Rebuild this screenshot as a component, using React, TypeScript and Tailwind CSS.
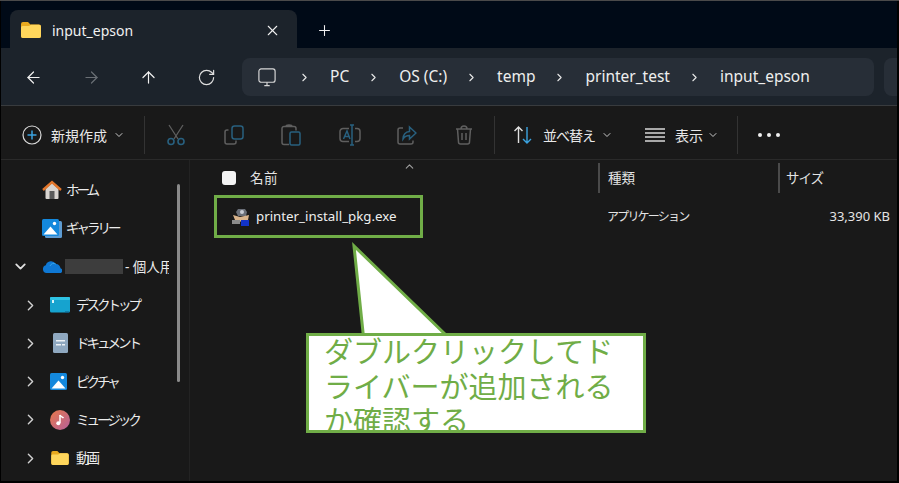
import { ArrowLeft, ArrowRight, ArrowUp, ChevronDown, ChevronRight, ChevronUp, Plus, RotateCw, X } from "lucide-react"
import type { ReactNode } from "react"

const FolderIcon = ({ w = 20, h = 16 }: { w?: number; h?: number }) => (
  <svg width={w} height={h} viewBox="0 0 20 16">
    <path d="M0 2a2 2 0 0 1 2-2h5l2.5 2.5H18a2 2 0 0 1 2 2V14a2 2 0 0 1-2 2H2a2 2 0 0 1-2-2z" fill="#e9a91f" />
    <path d="M0 5.5a1.5 1.5 0 0 1 1.5-1.500L8 4l2-1.300h8a2 2 0 0 1 2 2V14a2 2 0 0 1-2 2H2a2 2 0 0 1-2-2z" fill="#ffd65c" />
  </svg>
)

const PictureIcon = ({ stacked }: { stacked?: boolean }) => (
  <svg width="20" height="20" viewBox="0 0 20 20">
    {stacked && <rect x="3" y="3" width="17" height="17" rx="1.500" fill="#5d9bd2" />}
    <rect x="0" y="1" width="17" height="17" rx="1.500" fill="#1488dc" />
    <circle cx="12.500" cy="5.500" r="1.700" fill="#fff" />
    <path d="M1.500 16.500 8.500 8.500l7 8z" fill="#fff" />
  </svg>
)

const SidebarIcons: Record<string, ReactNode> = {
  home: (
    <svg width="20" height="20" viewBox="0 0 20 20">
      <path d="M3.500 9v9a1 1 0 0 0 1 1h11a1 1 0 0 0 1-1V9L10 3z" fill="#d8d4d0" />
      <rect x="7.500" y="11" width="5" height="8" fill="#5a5a5a" />
      <path d="M1 10 10 2l9 8" fill="none" stroke="#e3762a" strokeWidth="2.400" />
    </svg>
  ),
  desktop: (
    <svg width="20" height="16" viewBox="0 0 20 16">
      <rect width="20" height="15.500" rx="1.500" fill="#16a3cf" />
      <rect x="0" y="0" width="20" height="3" rx="1" fill="#2ec3e4" />
      <rect x="2" y="3" width="2" height="3" fill="#d6f3fb" />
      <rect x="15" y="14.500" width="4" height="1.500" fill="#0d5d82" />
    </svg>
  ),
  documents: (
    <svg width="15" height="20" viewBox="0 0 15 20">
      <rect width="15" height="20" rx="1.500" fill="#8fa8c0" />
      <rect x="3" y="7" width="9" height="1.500" fill="#eef2f6" />
      <rect x="3" y="11" width="5" height="1.500" fill="#eef2f6" />
      <rect x="9" y="11" width="3" height="1.500" fill="#eef2f6" />
    </svg>
  ),
  pictures: <PictureIcon />,
  gallery: <PictureIcon stacked />,
  music: (
    <svg width="20" height="20" viewBox="0 0 20 20">
      <defs>
        <linearGradient id="music" x1="0" y1="0" x2="1" y2="1">
          <stop offset="0" stopColor="#e8784a" />
          <stop offset="1" stopColor="#b4609c" />
        </linearGradient>
      </defs>
      <circle cx="10" cy="10" r="10" fill="url(#music)" />
      <path d="M10 5v8" stroke="#fff" strokeWidth="1.500" />
      <path d="M10 5c1 2 2.500 2 3.500 3" stroke="#fff" strokeWidth="1.500" fill="none" />
      <circle cx="8.300" cy="13.300" r="2" fill="#fff" />
    </svg>
  ),
  videos: <FolderIcon w={18} h={14} />,
  cloud: (
    <svg width="20" height="13" viewBox="0 0 20 13">
      <path d="M4.500 13A4 4 0 0 1 3.800 5.200 5.500 5.500 0 0 1 13.800 4a4.500 4.500 0 0 1 4.700 4.200A2.500 2.500 0 0 1 17 13z" fill="#0f78d4" />
      <path d="M8 6a4 4 0 0 1 5.800-2" stroke="#36a5ec" strokeWidth="1" fill="none" />
    </svg>
  ),
}

function NavRow({ depth, icon, children }: { depth: number; icon: string; children: ReactNode }) {
  return (
    <div className="h-[38.3px] flex items-center">
      {depth === 1 ? (
        <>
          <span className="w-[21px] shrink-0" />
          <ChevronRight className="w-[17px] h-[17px] mr-[11px] text-[#d0d0d0] shrink-0" strokeWidth={2} />
        </>
      ) : (
        <span className="w-[41px] shrink-0" />
      )}
      <span className="w-[20px] shrink-0 flex items-center justify-center">{SidebarIcons[icon]}</span>
      <span className={`${depth === 1 ? "ml-[6px]" : "ml-[4px]"} text-[13.500px] tracking-[-3px] text-[#ececec] whitespace-nowrap`}>{children}</span>
    </div>
  )
}

const dimGrey = "#5f5f5f"
const dimBlue = "#28607f"

const CommandIcons = {
  cut: (
    <svg width="20" height="22" viewBox="0 0 20 22" fill="none" strokeWidth="1.300">
      <path d="M3 1 12 15M17 1 8 15" stroke={dimGrey} />
      <circle cx="5" cy="17.500" r="3" stroke={dimBlue} strokeWidth="1.600" />
      <circle cx="15" cy="17.500" r="3" stroke={dimBlue} strokeWidth="1.600" />
    </svg>
  ),
  copy: (
    <svg width="20" height="20" viewBox="0 0 20 20" fill="none" strokeWidth="1.500">
      <path d="M4.500 5H3a2 2 0 0 0-2 2v10a2 2 0 0 0 2 2h7a2 2 0 0 0 2-2v-1.500" stroke={dimGrey} />
      <rect x="8" y="1" width="11" height="13" rx="2.500" stroke={dimBlue} />
    </svg>
  ),
  paste: (
    <svg width="20" height="22" viewBox="0 0 20 22" fill="none" strokeWidth="1.500">
      <path d="M8 20.500H3a2 2 0 0 1-2-2V4.500a2 2 0 0 1 2-2h10a2 2 0 0 1 2 2v2M5 2.500c0-1 1-1.500 3-1.500s3 .5 3 1.500" stroke={dimGrey} />
      <rect x="9" y="8" width="10" height="13" rx="1.500" stroke={dimBlue} />
    </svg>
  ),
  rename: (
    <svg width="22" height="22" viewBox="0 0 22 22" fill="none" strokeWidth="1.500">
      <path d="M10 4.500H4a3 3 0 0 0-3 3v7a3 3 0 0 0 3 3h6M16 4.500h2a3 3 0 0 1 3 3v7a3 3 0 0 1-3 3h-2" stroke={dimGrey} />
      <path d="M4.500 15 8 7l3 8M5.500 12.500h5M13 1v20M11 1h4M11 21h4" stroke={dimBlue} />
    </svg>
  ),
  share: (
    <svg width="20" height="20" viewBox="0 0 20 20" fill="none" strokeWidth="1.500">
      <path d="M6 3H3a2 2 0 0 0-2 2v12a2 2 0 0 0 2 2h11a2 2 0 0 0 2-2v-1.500" stroke={dimGrey} />
      <path d="M12.500 2 19 8l-6.500 6v-3.500c-3 0-5 1-6.500 3.500 0-4 2.500-7.500 6.500-7.500z" stroke={dimBlue} />
    </svg>
  ),
  trash: (
    <svg width="18" height="20" viewBox="0 0 18 20" fill="none" stroke={dimGrey} strokeWidth="1.500">
      <path d="M1 4h16M6 4c0-2 1-3 3-3s3 1 3 3M2.500 4l1 13a2 2 0 0 0 2 2h7a2 2 0 0 0 2-2l1-13M7 8v7M11 8v7" />
    </svg>
  ),
}

function CommandSlot({ width, children }: { width: number; children: ReactNode }) {
  return <div className="flex items-center justify-center shrink-0" style={{ width }}>{children}</div>
}

const Divider = () => <div className="w-px h-[38px] bg-[#333333] shrink-0" />

const crumbs = ["PC", "OS (C:)", "temp", "printer_test", "input_epson"]

export default function App() {
  return (
    <div className="relative w-[899px] h-[483px] overflow-hidden bg-black pl-px pr-[2px] pb-[2px] border-t border-t-[#4a4a4a] flex flex-col font-['Noto_Sans','Noto_Sans_CJK_JP',sans-serif]">
      {/* tab strip */}
      <div className="h-[47px] shrink-0 bg-[#000a17] flex items-end pl-[9px]">
        <div className="w-[287px] h-[38px] pt-[2px] bg-[#1c232b] rounded-t-lg flex items-center pl-[11px] pr-[16px]">
          <span className="-mt-px"><FolderIcon /></span>
          <span className="ml-[11px] text-[14px] text-[#f0f0f0]">input_epson</span>
          <X className="ml-auto w-[17px] h-[17px] text-[#f0f0f0]" strokeWidth={1.500} />
        </div>
        <div className="h-[38px] pt-[2px] flex items-center ml-[19px]">
          <Plus className="w-[17px] h-[17px] text-[#f0f0f0]" strokeWidth={1.500} />
        </div>
      </div>

      {/* nav bar */}
      <div className="h-[58px] shrink-0 bg-[#1c232b] flex items-center border-b border-b-[#383b3e] pl-[4px] pt-[1px]">
        <div className="flex items-center shrink-0">
          {[
            { I: ArrowLeft, c: "text-[#f0f0f0]" },
            { I: ArrowRight, c: "text-[#6a6f75]" },
            { I: ArrowUp, c: "text-[#f0f0f0]" },
            { I: RotateCw, c: "text-[#e0e0e0]" },
          ].map(({ I, c }, i) => (
            <div key={i} className="w-[57.500px] flex justify-center">
              <I className={`w-[19px] h-[19px] ${c}`} strokeWidth={1.500} />
            </div>
          ))}
        </div>
        <div className="ml-[7px] w-[632px] h-[38px] bg-[#272e37] rounded-lg flex items-center pl-[16px] gap-[21px] text-[15.500px] text-[#eeeeee] shrink-0">
          <svg width="18" height="19" viewBox="0 0 20 20" fill="none" stroke="#d8d8d8" strokeWidth="1.300" className="mr-[4px]" preserveAspectRatio="none">
            <rect x="1" y="1" width="18" height="14" rx="2.500" />
            <path d="M7 18.500h6M10 15v3.500" />
          </svg>
          {crumbs.map((c) => (
            <div key={c} className="flex items-center gap-[22px]">
              <ChevronRight className="w-[13px] h-[13px] -mx-[3px] text-[#e8e8e8]" strokeWidth={2} />
              <span className="whitespace-nowrap">{c}</span>
            </div>
          ))}
        </div>
        <div className="ml-[10px] flex-1 h-[38px] bg-[#272e37] rounded-l-lg" />
      </div>

      {/* command bar */}
      <div className="h-[54px] shrink-0 bg-[#191919] flex items-center border-b border-b-[#2a2a2a] text-[14px] text-[#e8e8e8] pl-[21px] pt-[5px]">
        <svg width="20" height="20" viewBox="0 0 20 20" fill="none" className="shrink-0">
          <circle cx="10" cy="10" r="9" stroke="#d8d8d8" strokeWidth="1.200" />
          <path d="M10 5.500v9M5.500 10h9" stroke="#3ba3e0" strokeWidth="1.500" />
        </svg>
        <span className="ml-[9px] whitespace-nowrap">新規作成</span>
        <ChevronDown className="ml-[6px] w-[12px] h-[12px] text-[#c8c8c8] shrink-0" strokeWidth={2} />
        <div className="w-[19px] shrink-0" />
        <Divider />
        <CommandSlot width={62}>{CommandIcons.cut}</CommandSlot>
        <CommandSlot width={54}>{CommandIcons.copy}</CommandSlot>
        <CommandSlot width={60}>{CommandIcons.paste}</CommandSlot>
        <CommandSlot width={57}>{CommandIcons.rename}</CommandSlot>
        <CommandSlot width={58}>{CommandIcons.share}</CommandSlot>
        <CommandSlot width={55}>{CommandIcons.trash}</CommandSlot>
        <div className="w-[3px] shrink-0" />
        <Divider />
        <svg width="20" height="20" viewBox="0 0 20 20" fill="none" strokeWidth="1.400" className="ml-[18px] shrink-0">
          <path d="M5.500 18V2M1.500 6l4-4 4 4" stroke="#e0e0e0" />
          <path d="M14 2v16M10 14l4 4 4-4" stroke="#3ba3e0" />
        </svg>
        <span className="ml-[10px] whitespace-nowrap tracking-[-1px]">並べ替え</span>
        <ChevronDown className="ml-[6px] w-[12px] h-[12px] text-[#c8c8c8] shrink-0" strokeWidth={2} />
        <svg width="20" height="14" viewBox="0 0 20 14" stroke="#d8d8d8" strokeWidth="1.300" className="ml-[32px] shrink-0">
          <path d="M0 1h20M0 5h20M0 9h20M0 13h20" />
        </svg>
        <span className="ml-[10px] whitespace-nowrap">表示</span>
        <ChevronDown className="ml-[4px] w-[12px] h-[12px] text-[#c8c8c8] shrink-0" strokeWidth={2} />
        <div className="w-[18px] shrink-0" />
        <Divider />
        <div className="ml-[20px] flex gap-[5px]">
          <span className="w-[4px] h-[4px] rounded-full bg-[#f0f0f0]" />
          <span className="w-[4px] h-[4px] rounded-full bg-[#f0f0f0]" />
          <span className="w-[4px] h-[4px] rounded-full bg-[#f0f0f0]" />
        </div>
      </div>

      {/* body */}
      <div className="flex-1 min-h-0 flex bg-[#191919]">
        <aside className="relative w-[189px] shrink-0 border-r border-r-[#232323] pt-[11px] overflow-hidden">
          <NavRow depth={0} icon="home">ホーム</NavRow>
          <NavRow depth={0} icon="gallery">ギャラリー</NavRow>
          <div className="h-[38.3px] flex items-center">
            <span className="w-[14px] shrink-0 ml-[12px] mr-[15px] flex items-center justify-center">
              <ChevronDown className="w-[17px] h-[17px] text-[#e0e0e0] shrink-0" strokeWidth={2.500} />
            </span>
            <span className="w-[20px] shrink-0 flex justify-center">{SidebarIcons.cloud}</span>
            <span className="ml-[3px] w-[58px] h-[15px] bg-[#3d3d3d] shrink-0" />
            <span className="ml-[2px] w-[44px] overflow-hidden text-[13.500px] text-[#ececec] whitespace-nowrap">- 個人用</span>
          </div>
          <NavRow depth={1} icon="desktop">デスクトップ</NavRow>
          <NavRow depth={1} icon="documents">ドキュメント</NavRow>
          <NavRow depth={1} icon="pictures">ピクチャ</NavRow>
          <NavRow depth={1} icon="music">ミュージック</NavRow>
          <NavRow depth={1} icon="videos">動画</NavRow>
          <div className="absolute left-[176px] top-[24px] w-[3px] h-[198px] rounded-full bg-[#8a8a8a]" />
        </aside>

        <main className="flex-1 min-w-0 relative text-[#e4e4e4]">
          {/* column header */}
          <div className="h-[36px] flex items-center text-[13.500px]">
            <div className="w-[408px] shrink-0 flex items-center pl-[32px]">
              <span className="w-[14px] h-[14px] bg-[#f4f4f4] rounded-[3px] shrink-0" />
              <span className="ml-[14px] tracking-[0.500px]">名前</span>
            </div>
            <div className="w-[180px] shrink-0 h-[30px] flex items-center border-l-2 border-l-[#4a4a4a] pl-[8px]">種類</div>
            <div className="h-[30px] flex items-center border-l-2 border-l-[#4a4a4a] pl-[6px] tracking-[-1px]">サイズ</div>
            <ChevronUp className="absolute left-[213px] top-0 w-[13px] h-[13px] text-[#a0a0a0]" strokeWidth={2} />
          </div>
          {/* file row */}
          <div className="mt-[1px] h-[40px] flex items-center">
            <div className="w-[417px] shrink-0 flex items-center pl-[42px]">
              <svg width="19" height="19" viewBox="0 0 19 19" className="shrink-0">
                <path d="M6 1h7l2 3-1 4H6L4 4z" fill="#6a6f78" />
                <path d="M1 7l7 2 9-2-1 5-6 2-7-2z" fill="#d9b48c" />
                <rect x="9" y="12" width="8" height="6" fill="#1233c8" />
                <rect x="0" y="12" width="8" height="4" fill="#8a8a8a" />
                <circle cx="10" cy="4" r="2" fill="#c8ccd4" />
              </svg>
              <span className="ml-[5px] text-[13.300px] text-[#eeeeee] whitespace-nowrap">printer_install_pkg.exe</span>
            </div>
            <span className="text-[12px] tracking-[-1.800px] whitespace-nowrap">アプリケーション</span>
            <span className="ml-auto mr-[7px] text-[13px] whitespace-nowrap">33,390 KB</span>
          </div>
        </main>
      </div>

      {/* annotation overlays */}
      <div className="absolute left-[214px] top-[194px] w-[209px] h-[43px] border-[3px] border-[#70ad47]" />
      <svg width="120" height="100" viewBox="0 0 120 100" className="absolute left-[340px] top-[240px]">
        <path d="M14 5 23.500 96H108z" fill="#ffffff" stroke="#70ad47" strokeWidth="3" strokeMiterlimit="10" />
      </svg>
      <div className="absolute left-[306px] top-[332px] w-[340px] h-[100px] border-[3.500px] border-[#70ad47] bg-white overflow-hidden pl-[15px] pt-0 text-[29px] leading-[34.500px] text-[#70ad47] font-['Noto_Sans_CJK_JP',sans-serif]">
        <p className="w-[296px] -mt-[3px]">ダブルクリックしてドライバーが追加されるか確認する</p>
      </div>
    </div>
  )
}
